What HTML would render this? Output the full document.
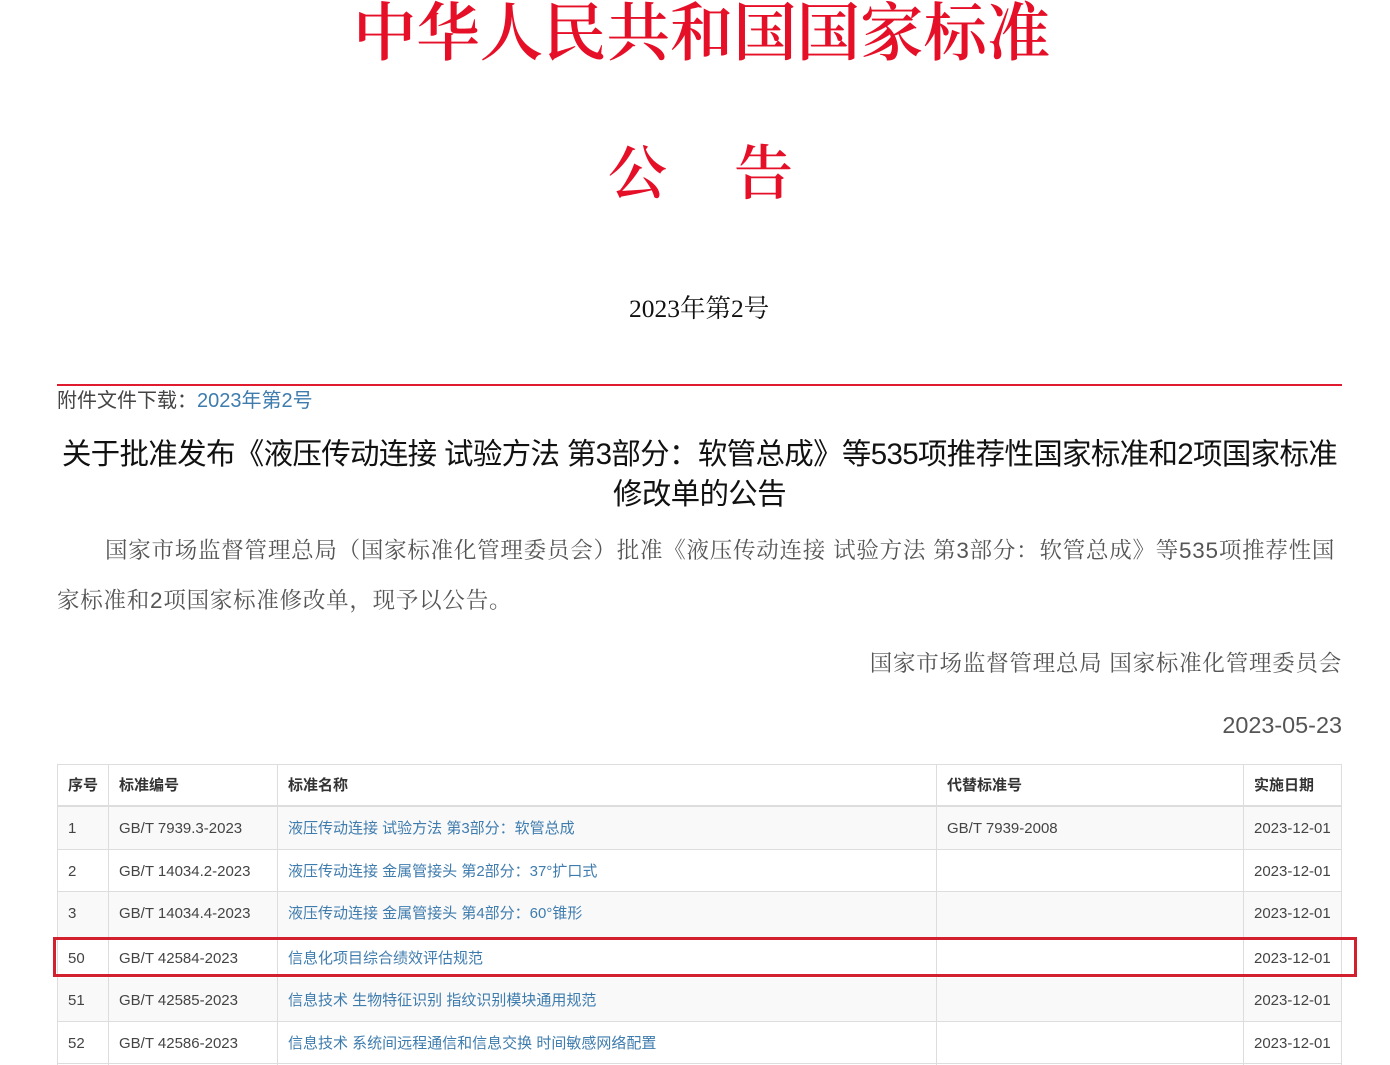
<!DOCTYPE html>
<html lang="zh-CN"><head><meta charset="utf-8"><title>公告</title>
<style>
html,body{margin:0;padding:0;background:#fff}
body{width:1390px;height:1065px;position:relative;overflow:hidden;font-family:"Liberation Sans","Noto Sans CJK SC",sans-serif;color:#333}
.a{position:absolute;white-space:nowrap;margin:0}
.serif{font-family:"Liberation Serif","Noto Serif CJK SC",serif}
.red{color:#e60f28;font-weight:700}
a{color:#3f7cae;text-decoration:none}
.p{color:#555;font-family:"Liberation Sans","Noto Serif CJK SC",serif;font-size:22.5px;letter-spacing:.76px}
.h{color:#111;font-size:29.5px;letter-spacing:-.68px;line-height:40px;text-align:center;left:57px;width:1285px}
.l{position:absolute;background:#ddd}
.c{position:absolute;white-space:nowrap;font-size:15px;line-height:20px;color:#444;margin-top:1px}
.c.b{font-weight:700;color:#333}
.c a{color:#3f7cae}
.s{position:absolute;left:58px;width:1283px;background:#f9f9f9}
</style></head><body>
<h1 class="a serif red" style="left:353px;top:-11px;font-size:63.4px;line-height:90px;font-weight:600">中华人民共和国国家标准</h1>
<div class="a serif red" style="left:608px;top:129px;font-size:59px;line-height:90px;font-weight:600">公</div>
<div class="a serif red" style="left:734px;top:129px;font-size:59px;line-height:90px;font-weight:600">告</div>
<div class="a serif" style="left:629px;top:292px;font-size:25.5px;line-height:34px;color:#111">2023年第2号</div>
<div class="a" style="left:57px;top:384px;width:1285px;height:2px;background:#e01b2f"></div>
<div class="a" style="left:57px;top:387px;font-size:20px;line-height:28px;color:#444">附件文件下载：<a href="#">2023年第2号</a></div>
<div class="a h" style="top:435px">关于批准发布《液压传动连接 试验方法 第3部分：软管总成》等535项推荐性国家标准和2项国家标准</div>
<div class="a h" style="top:475px">修改单的公告</div>
<div class="a p" style="left:105px;top:534px;line-height:34px">国家市场监督管理总局（国家标准化管理委员会）批准《液压传动连接 试验方法 第3部分：软管总成》等535项推荐性国</div>
<div class="a p" style="left:57px;top:584px;line-height:34px">家标准和2项国家标准修改单，现予以公告。</div>
<div class="a p" style="right:48px;top:647px;line-height:34px">国家市场监督管理总局 国家标准化管理委员会</div>
<div class="a" style="right:48px;top:708px;font-size:23.4px;line-height:34px;color:#555">2023-05-23</div>

<div class="s" style="top:807px;height:42px"></div>
<div class="s" style="top:892px;height:45px"></div>
<div class="s" style="top:978px;height:43px"></div>

<div class="l" style="left:57px;top:764px;width:1285px;height:1px"></div>
<div class="l" style="left:57px;top:805px;width:1285px;height:2px"></div>
<div class="l" style="left:57px;top:849px;width:1285px;height:1px"></div>
<div class="l" style="left:57px;top:891px;width:1285px;height:1px"></div>
<div class="l" style="left:57px;top:1021px;width:1285px;height:1px"></div>
<div class="l" style="left:57px;top:1063px;width:1285px;height:1px"></div>
<div class="l" style="left:57px;top:764px;width:1px;height:301px"></div>
<div class="l" style="left:108px;top:764px;width:1px;height:301px"></div>
<div class="l" style="left:277px;top:764px;width:1px;height:301px"></div>
<div class="l" style="left:936px;top:764px;width:1px;height:301px"></div>
<div class="l" style="left:1243px;top:764px;width:1px;height:301px"></div>
<div class="l" style="left:1341px;top:764px;width:1px;height:301px"></div>

<div class="c b" style="left:68px;top:775px">序号</div>
<div class="c b" style="left:119px;top:775px">标准编号</div>
<div class="c b" style="left:288px;top:775px">标准名称</div>
<div class="c b" style="left:947px;top:775px">代替标准号</div>
<div class="c b" style="left:1254px;top:775px">实施日期</div>

<div class="c" style="left:68px;top:818px">1</div>
<div class="c" style="left:119px;top:818px">GB/T 7939.3-2023</div>
<div class="c" style="left:288px;top:818px"><a href="#">液压传动连接 试验方法 第3部分：软管总成</a></div>
<div class="c" style="left:947px;top:818px">GB/T 7939-2008</div>
<div class="c" style="left:1254px;top:818px">2023-12-01</div>

<div class="c" style="left:68px;top:861px">2</div>
<div class="c" style="left:119px;top:861px">GB/T 14034.2-2023</div>
<div class="c" style="left:288px;top:861px"><a href="#">液压传动连接 金属管接头 第2部分：37°扩口式</a></div>
<div class="c" style="left:1254px;top:861px">2023-12-01</div>

<div class="c" style="left:68px;top:903px">3</div>
<div class="c" style="left:119px;top:903px">GB/T 14034.4-2023</div>
<div class="c" style="left:288px;top:903px"><a href="#">液压传动连接 金属管接头 第4部分：60°锥形</a></div>
<div class="c" style="left:1254px;top:903px">2023-12-01</div>

<div class="c" style="left:68px;top:948px">50</div>
<div class="c" style="left:119px;top:948px">GB/T 42584-2023</div>
<div class="c" style="left:288px;top:948px"><a href="#">信息化项目综合绩效评估规范</a></div>
<div class="c" style="left:1254px;top:948px">2023-12-01</div>

<div class="c" style="left:68px;top:990px">51</div>
<div class="c" style="left:119px;top:990px">GB/T 42585-2023</div>
<div class="c" style="left:288px;top:990px"><a href="#">信息技术 生物特征识别 指纹识别模块通用规范</a></div>
<div class="c" style="left:1254px;top:990px">2023-12-01</div>

<div class="c" style="left:68px;top:1033px">52</div>
<div class="c" style="left:119px;top:1033px">GB/T 42586-2023</div>
<div class="c" style="left:288px;top:1033px"><a href="#">信息技术 系统间远程通信和信息交换 时间敏感网络配置</a></div>
<div class="c" style="left:1254px;top:1033px">2023-12-01</div>

<div class="a" style="left:53px;top:937px;width:1298px;height:34px;border:3px solid #d3202e"></div>
</body></html>
